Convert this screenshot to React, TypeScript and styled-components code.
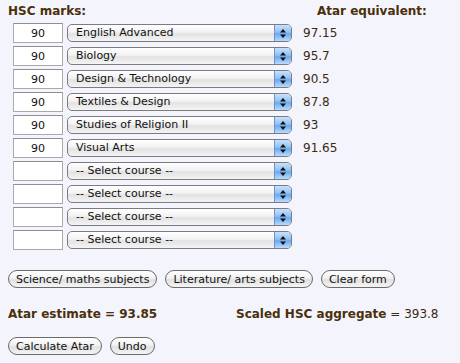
import React, { useState } from 'react';
import styled, { createGlobalStyle } from 'styled-components';

const GlobalStyle = createGlobalStyle`
  html, body {
    margin: 0;
    padding: 0;
    background: #f4f4fd;
  }
  body {
    font-family: "DejaVu Sans", Verdana, sans-serif;
    color: #3a2a0c;
  }
`;

const Page = styled.div`
  width: 460px;
  height: 363px;
  padding: 4px 8px 0 8px;
  box-sizing: border-box;
  background: #f4f4fd;
`;

const Header = styled.div`
  display: flex;
  height: 14px;
  margin-bottom: 4px;
`;

const Heading = styled.div<{ $width?: number }>`
  font-size: 12px;
  font-weight: bold;
  color: #4a300a;
  line-height: 14px;
  width: ${(p) => (p.$width ? `${p.$width}px` : 'auto')};
`;

const Rows = styled.div`
  display: flex;
  flex-direction: column;
  gap: 3px;
  padding-left: 5px;
  padding-top: 1px;
`;

const Row = styled.div`
  display: flex;
  align-items: center;
  height: 20px;
`;

const MarkInput = styled.input`
  width: 50px;
  height: 20px;
  box-sizing: border-box;
  border: 1px solid #a9a9ad;
  border-top-color: #8d8d92;
  background: #fff;
  font-family: "DejaVu Sans", Verdana, sans-serif;
  font-size: 11px;
  color: #111;
  text-align: center;
  padding: 0;
  outline: none;
`;

const SelectBox = styled.div`
  margin-left: 4px;
  width: 225px;
  height: 18px;
  box-sizing: border-box;
  display: flex;
  border: 1px solid #7c7c80;
  border-radius: 5px;
  overflow: hidden;
  background: linear-gradient(#ffffff 0%, #f2f2f2 45%, #e2e2e2 55%, #f4f4f4 100%);
`;

const SelectText = styled.div`
  flex: 1;
  font-size: 11px;
  line-height: 16px;
  padding-left: 8px;
  color: #111;
  white-space: nowrap;
`;

const Arrows = styled.div`
  width: 16px;
  border-left: 1px solid #6f8fd0;
  background: linear-gradient(#c8e2fb 0%, #8fc1f5 45%, #6aa9ef 55%, #b7dcfd 100%);
  display: flex;
  flex-direction: column;
  align-items: center;
  justify-content: center;
`;

const Value = styled.div`
  margin-left: 11px;
  font-size: 12px;
  color: #3a2a0c;
`;

const ButtonRow = styled.div<{ $top: number }>`
  display: flex;
  gap: 8px;
  margin-top: ${(p) => p.$top}px;
`;

const PillButton = styled.button`
  height: 18px;
  box-sizing: border-box;
  border: 1px solid #6a6a6a;
  border-radius: 9px;
  background: linear-gradient(#ffffff 0%, #f1f1f1 45%, #e0e0e0 55%, #f5f5f5 100%);
  font-family: "DejaVu Sans", Verdana, sans-serif;
  font-size: 11px;
  color: #111;
  padding: 0 7px;
  line-height: 15px;
  cursor: pointer;
`;

const Results = styled.div`
  display: flex;
  margin-top: 19px;
  height: 14px;
  font-size: 12px;
  line-height: 14px;
`;

const Bold = styled.span`
  font-weight: bold;
  color: #4a300a;
`;

const ResultCell = styled.div<{ $width?: number }>`
  width: ${(p) => (p.$width ? `${p.$width}px` : 'auto')};
  white-space: nowrap;
`;

const ArrowIcon = () => (
  <svg width="6" height="11" viewBox="0 0 6 11">
    <path d="M3 1 L6 4.5 L0 4.5 Z" fill="#111" />
    <path d="M0 6.5 L6 6.5 L3 10 Z" fill="#111" />
  </svg>
);

interface Subject {
  mark: string;
  course: string;
  atar: string;
}

const initial: Subject[] = [
  { mark: '90', course: 'English Advanced', atar: '97.15' },
  { mark: '90', course: 'Biology', atar: '95.7' },
  { mark: '90', course: 'Design & Technology', atar: '90.5' },
  { mark: '90', course: 'Textiles & Design', atar: '87.8' },
  { mark: '90', course: 'Studies of Religion II', atar: '93' },
  { mark: '90', course: 'Visual Arts', atar: '91.65' },
  { mark: '', course: '-- Select course --', atar: '' },
  { mark: '', course: '-- Select course --', atar: '' },
  { mark: '', course: '-- Select course --', atar: '' },
  { mark: '', course: '-- Select course --', atar: '' },
];

export default function App() {
  const [subjects, setSubjects] = useState<Subject[]>(initial);

  const setMark = (i: number, mark: string) =>
    setSubjects((s) => s.map((x, j) => (j === i ? { ...x, mark } : x)));

  return (
    <Page>
      <GlobalStyle />
      <Header>
        <Heading $width={309}>HSC marks:</Heading>
        <Heading>Atar equivalent:</Heading>
      </Header>
      <Rows>
        {subjects.map((s, i) => (
          <Row key={i}>
            <MarkInput value={s.mark} onChange={(e) => setMark(i, e.target.value)} />
            <SelectBox>
              <SelectText>{s.course}</SelectText>
              <Arrows>
                <ArrowIcon />
              </Arrows>
            </SelectBox>
            <Value>{s.atar}</Value>
          </Row>
        ))}
      </Rows>
      <ButtonRow $top={20}>
        <PillButton>Science/ maths subjects</PillButton>
        <PillButton>Literature/ arts subjects</PillButton>
        <PillButton onClick={() => setSubjects(initial.map(() => ({ mark: '', course: '-- Select course --', atar: '' })))}>
          Clear form
        </PillButton>
      </ButtonRow>
      <Results>
        <ResultCell $width={228}>
          <Bold>Atar estimate = 93.85</Bold>
        </ResultCell>
        <ResultCell>
          <Bold>Scaled HSC aggregate</Bold> = 393.8
        </ResultCell>
      </Results>
      <ButtonRow $top={16}>
        <PillButton>Calculate Atar</PillButton>
        <PillButton onClick={() => setSubjects(initial)}>Undo</PillButton>
      </ButtonRow>
    </Page>
  );
}
